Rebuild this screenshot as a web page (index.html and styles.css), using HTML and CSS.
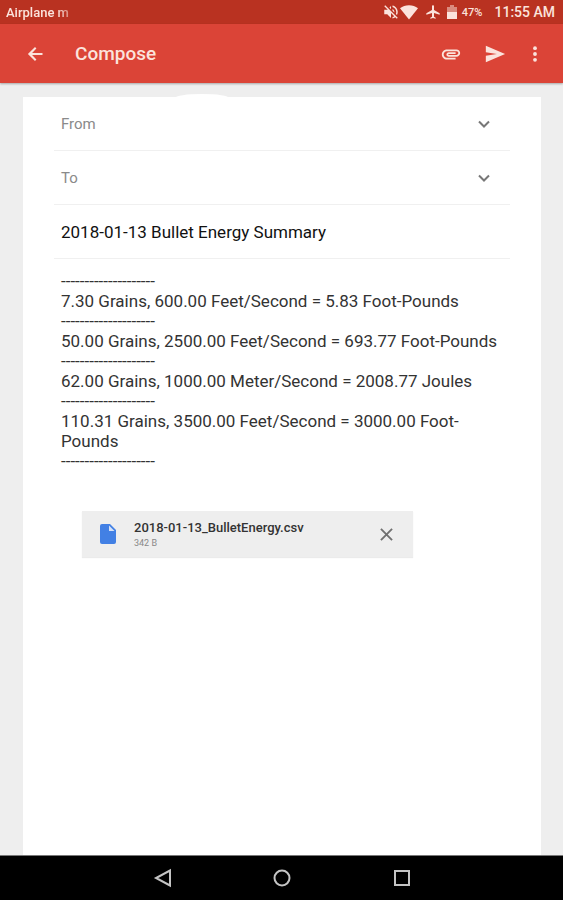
FILE: index.html
```html
<!DOCTYPE html>
<html lang="en">

<head>
  <meta charset="UTF-8" />
  <meta name="viewport" content="width=device-width, initial-scale=1.0" />
  <title>Compose</title>
  <link rel="stylesheet" href="styles.css">
</head>

<body>
  <div class="status">
    <span class="notice">Airplane m</span>
    <div class="status-icons">
      <svg class="i-mute" viewBox="0 0 24 24"><path d="M4.3 3L3 4.3 7.7 9H3v6h4l5 5v-6.700l4.300 4.200c-.7.5-1.500.9-2.300 1.200v2c1.400-.3 2.600-1 3.700-1.800L19.700 21 21 19.700 4.300 3zM12 4L9.900 6.100 12 8.200V4zm7 8c0 .9-.2 1.800-.5 2.600l1.500 1.500c.6-1.200 1-2.600 1-4.100 0-4.300-3-7.900-7-8.800v2.100c2.900.9 5 3.500 5 6.700zm-2.500 0c0-1.800-1-3.300-2.500-4v2.200l2.500 2.500V12z"/></svg>
      <svg class="i-wifi" viewBox="0 0 24 24"><path d="M12 22L24 7C20.700 4.300 16.500 3 12 3S3.300 4.300 0 7z"/></svg>
      <svg class="i-plane" viewBox="0 0 24 24"><path d="M22 16v-2l-8.500-5V3.500C13.500 2.700 12.800 2 12 2s-1.500.7-1.500 1.500V9L2 14v2l8.500-2.500V19L8 20.500V22l4-1 4 1v-1.500L13.500 19v-5.500z"/></svg>
      <svg class="i-battery" viewBox="0 0 10 14"><path opacity=".5" d="M3 0h4v2h3v5H0V2h3z"/><path d="M0 7h10v7H0z"/></svg>
      <span class="percent">47%</span>
      <span class="time">11:55 AM</span>
    </div>
  </div>

  <header class="bar">
    <button class="back" type="button" aria-label="Back">
      <svg viewBox="0 0 24 24"><path d="M21 10.700H8.500l5.200-5.200L12 3.500 3.500 12l8.500 8.500 1.700-2-5.200-5.200H21z"/></svg>
    </button>
    <h1>Compose</h1>
    <button type="button" aria-label="Attach file">
      <svg viewBox="0 0 24 24"><path d="M2 12.500C2 9.460 4.460 7 7.500 7H18c2.210 0 4 1.790 4 4s-1.790 4-4 4H9.500C8.120 15 7 13.880 7 12.500S8.120 10 9.500 10H17v2H9.410c-.55 0-.55 1 0 1H18c1.100 0 2-.9 2-2s-.9-2-2-2H7.500C5.570 9 4 10.570 4 12.500S5.570 16 7.500 16H17v2H7.500C4.460 18 2 15.540 2 12.500z"/></svg>
    </button>
    <button type="button" aria-label="Send">
      <svg viewBox="0 0 24 24"><path d="M2 21L23 12 2 3v7l12 2-12 2z"/></svg>
    </button>
    <button class="more" type="button" aria-label="More options">
      <svg viewBox="0 0 24 24"><circle cx="12" cy="5" r="2.300"/><circle cx="12" cy="12" r="2.300"/><circle cx="12" cy="19" r="2.300"/></svg>
    </button>
  </header>

  <main>
    <form class="card">
      <div class="row">
        <label for="from">From</label>
        <input type="text" id="from">
        <button type="button" aria-label="Choose account">
          <svg viewBox="0 0 14 14"><path d="M2 4.500l5 5 5-5"/></svg>
        </button>
      </div>
      <div class="row">
        <label for="to">To</label>
        <input type="text" id="to">
        <button type="button" aria-label="Add Cc/Bcc">
          <svg viewBox="0 0 14 14"><path d="M2 4.500l5 5 5-5"/></svg>
        </button>
      </div>
      <div class="row">
        <input type="text" id="subject" aria-label="Subject" value="2018-01-13 Bullet Energy Summary">
      </div>
      <textarea rows="10" aria-label="Message">--------------------
7.30 Grains, 600.00 Feet/Second = 5.83 Foot-Pounds
--------------------
50.00 Grains, 2500.00 Feet/Second = 693.77 Foot-Pounds
--------------------
62.00 Grains, 1000.00 Meter/Second = 2008.77 Joules
--------------------
110.31 Grains, 3500.00 Feet/Second = 3000.00 Foot-Pounds
--------------------</textarea>
      <div class="file">
        <svg class="doc" viewBox="0 0 16 20"><path fill="#4280e4" d="M2 0h8l6 6v12a2 2 0 0 1-2 2H2a2 2 0 0 1-2-2V2a2 2 0 0 1 2-2z"/><path fill="#d5e2f8" d="M9 1.500V7h5.500z"/></svg>
        <div class="info">
          <p class="name">2018-01-13_BulletEnergy.csv</p>
          <p class="size">342 B</p>
        </div>
        <button type="button" aria-label="Remove attachment">
          <svg viewBox="0 0 14 14"><path d="M1 1l12 12M13 1L1 13"/></svg>
        </button>
      </div>
    </form>
  </main>

  <nav class="keys">
    <button type="button" aria-label="Back">
      <svg viewBox="0 0 20 20"><path d="M18 2.500v15L4 10z"/></svg>
    </button>
    <button type="button" aria-label="Home">
      <svg viewBox="0 0 20 20"><circle cx="10" cy="10" r="7.500"/></svg>
    </button>
    <button type="button" aria-label="Recent apps">
      <svg viewBox="0 0 20 20"><path d="M3 3h14v14H3z"/></svg>
    </button>
  </nav>
</body>

</html>
```

FILE: styles.css
```css
* {
  margin: 0;
  padding: 0;
  box-sizing: border-box;
}

body {
  display: flex;
  flex-direction: column;
  min-height: 100vh;
  background-color: #eee;
  font-family: Roboto, "Liberation Sans", sans-serif;
  font-size: 17px;
  color: #333;
}

button {
  display: flex;
  align-items: center;
  justify-content: center;
  border: none;
  background: none;
  cursor: pointer;
}

input,
textarea {
  border: none;
  outline: none;
  background: none;
  font: inherit;
  color: inherit;
}

/* status bar */
.status {
  display: flex;
  justify-content: space-between;
  align-items: center;
  height: 24px;
  padding: 0 8px 0 6px;
  background-color: #b93221;
  color: #fbe3dc;
  font-size: 13px;
  font-weight: 500;
}

.notice {
  white-space: nowrap;
  -webkit-mask-image: linear-gradient(to right, #000 80%, rgba(0, 0, 0, .5));
  mask-image: linear-gradient(to right, #000 80%, rgba(0, 0, 0, .5));
}

.status-icons {
  display: flex;
  align-items: center;
}

.status svg,
.bar svg {
  fill: #fbe3dc;
}

.i-mute {
  width: 18px;
  height: 18px;
}

.i-wifi {
  width: 18px;
  height: 18px;
  margin-right: 7px;
}

.i-plane {
  width: 16px;
  height: 16px;
  margin-right: 6px;
}

.i-battery {
  width: 10px;
  height: 14px;
  margin-right: 5px;
}

.percent {
  margin-right: 12px;
  font-size: 11px;
}

.time {
  font-size: 14px;
}

/* app bar */
.bar {
  display: flex;
  align-items: center;
  gap: 4px;
  height: 59px;
  padding: 0 12px 0 15px;
  background-color: #db4437;
  box-shadow: 0 1px 2px rgba(0, 0, 0, .3);
}

.bar button {
  width: 40px;
  height: 40px;
}

.bar .more {
  width: 32px;
}

.bar svg {
  width: 22px;
  height: 22px;
}

.bar .back svg,
.bar .more svg {
  width: 20px;
  height: 20px;
}

.bar h1 {
  flex: 1;
  padding-left: 16px;
  font-size: 19px;
  font-weight: 500;
  color: #fbe3dc;
}

/* message */
main {
  flex: 1;
  display: flex;
  padding: 14px 22px 0 23px;
}

.card {
  position: relative;
  flex: 1;
  min-width: 0;
  padding: 0 31px;
  background-color: #fff;
}

.card::before {
  content: "";
  position: absolute;
  left: 152px;
  top: -3px;
  width: 54px;
  height: 8px;
  border-radius: 50%;
  background-color: #fff;
}

.row {
  display: flex;
  align-items: center;
  height: 54px;
  padding: 0 8px 0 7px;
  border-bottom: 1px solid #f0f0f0;
}

.row label {
  font-size: 15px;
  color: #8a8a8a;
}

.row input {
  flex: 1;
  min-width: 0;
}

.row button {
  width: 36px;
  height: 36px;
}

.row svg {
  width: 14px;
  height: 14px;
  fill: none;
  stroke: #777;
  stroke-width: 2;
}

#subject {
  color: #111;
}

textarea {
  display: block;
  width: 100%;
  padding: 12px 8px 0 7px;
  line-height: 20px;
  resize: none;
  overflow: hidden;
}

/* attachment */
.file {
  display: flex;
  align-items: center;
  max-width: 331px;
  height: 46px;
  margin: 40px 0 0 28px;
  padding: 0 9px 0 18px;
  background-color: #eee;
  box-shadow: 0 1px 1px rgba(0, 0, 0, .08);
}

.doc {
  width: 16px;
  height: 20px;
}

.info {
  flex: 1;
  padding-left: 18px;
}

.name {
  font-size: 13px;
  font-weight: 500;
  line-height: 18px;
}

.size {
  font-size: 9px;
  line-height: 12px;
  color: #888;
}

.file button {
  width: 36px;
  height: 36px;
}

.file button svg {
  width: 13px;
  height: 13px;
  stroke: #707070;
  stroke-width: 2;
}

/* navigation keys */
.keys {
  display: flex;
  justify-content: center;
  gap: 96px;
  height: 45px;
  border-top: 1px solid #777;
  background-color: #000;
}

.keys button {
  width: 24px;
}

.keys svg {
  width: 20px;
  height: 20px;
  fill: none;
  stroke: #c4c4c4;
  stroke-width: 2;
}
```
